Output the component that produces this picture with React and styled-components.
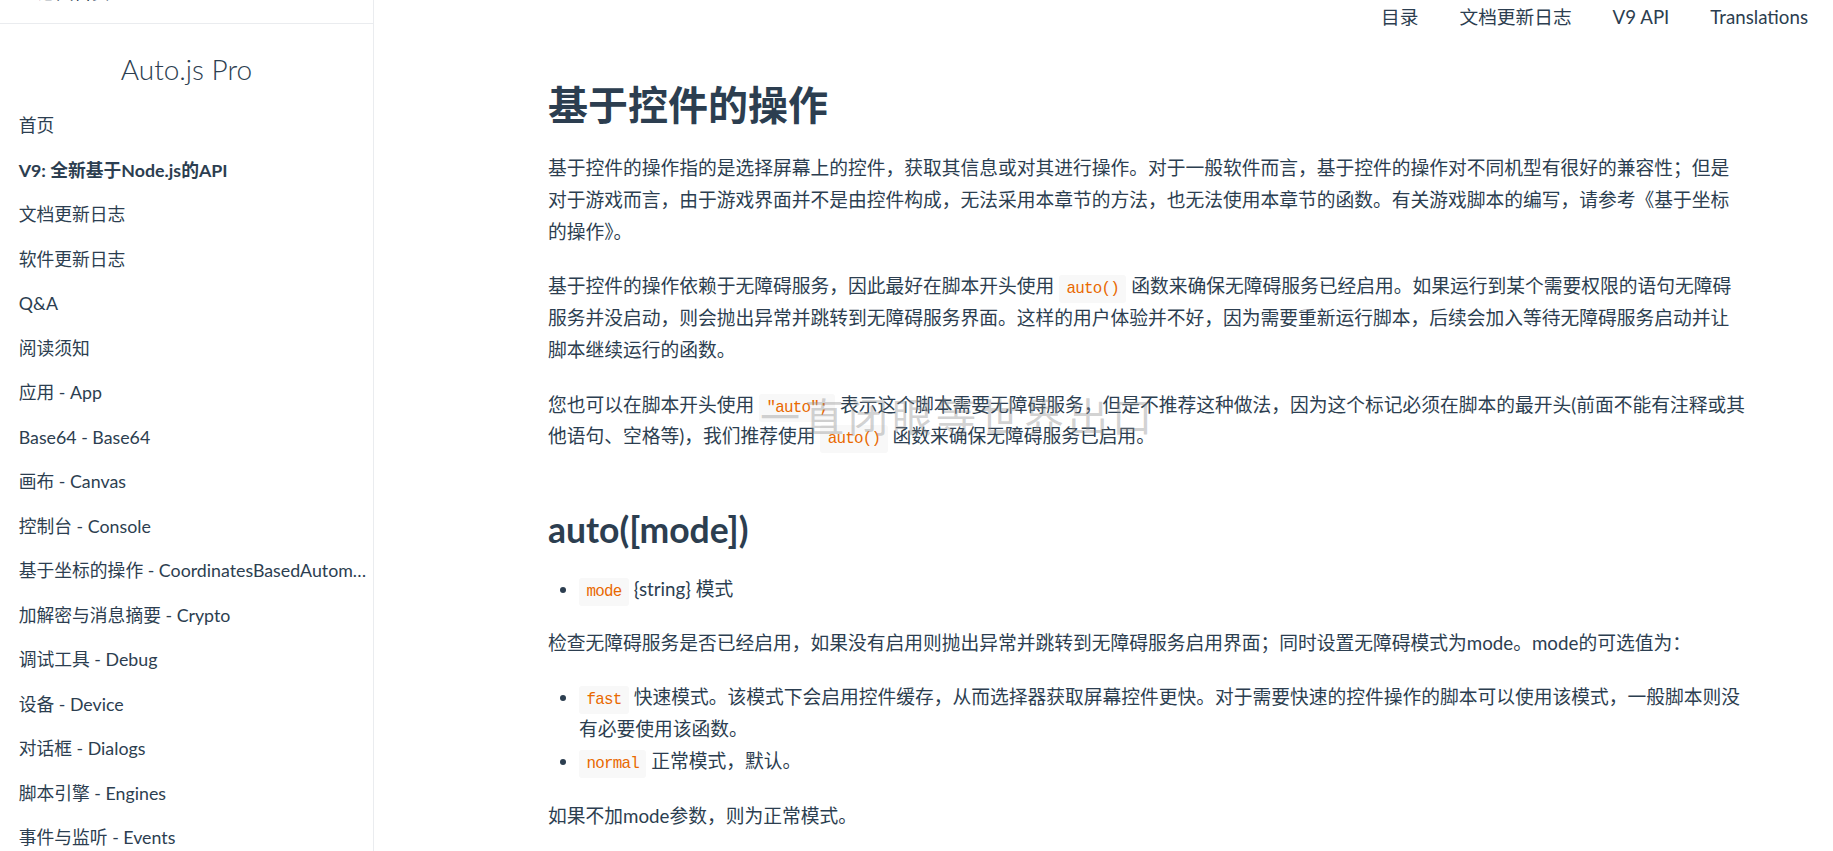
import React from "react";
import styled, { createGlobalStyle } from "styled-components";

const GlobalStyle = createGlobalStyle`
  html, body {
    margin: 0;
    padding: 0;
    background: #fff;
  }
  body {
    font-family: Lato, "Noto Sans CJK SC", sans-serif;
    color: #2c3e50;
    overflow: hidden;
  }
`;

const sidebarLinks = [
  { text: "首页" },
  { text: "V9: 全新基于Node.js的API", active: true },
  { text: "文档更新日志" },
  { text: "软件更新日志" },
  { text: "Q&A" },
  { text: "阅读须知" },
  { text: "应用 - App" },
  { text: "Base64 - Base64" },
  { text: "画布 - Canvas" },
  { text: "控制台 - Console" },
  { text: "基于坐标的操作 - CoordinatesBasedAutomation" },
  { text: "加解密与消息摘要 - Crypto" },
  { text: "调试工具 - Debug" },
  { text: "设备 - Device" },
  { text: "对话框 - Dialogs" },
  { text: "脚本引擎 - Engines" },
  { text: "事件与监听 - Events" },
  { text: "文件系统 - Files" },
  { text: "悬浮窗 - Floaty" },
];

const navLinks = ["目录", "文档更新日志", "V9 API", "Translations"];

function App() {
  return (
    <>
      <GlobalStyle />
      <Page>
        <Sidebar>
          <SidebarTop>
            <BackLink>← 返回首页</BackLink>
          </SidebarTop>
          <SiteTitle>Auto.js Pro</SiteTitle>
          <LinkList>
            {sidebarLinks.map((link) => (
              <SidebarLink key={link.text} $active={link.active}>
                {link.text}
              </SidebarLink>
            ))}
          </LinkList>
        </Sidebar>
        <Main>
          <NavBar>
            {navLinks.map((item) => (
              <NavItem key={item}>{item}</NavItem>
            ))}
          </NavBar>
          <Content>
            <Title>基于控件的操作</Title>
            <Para>
              基于控件的操作指的是选择屏幕上的控件，获取其信息或对其进行操作。对于一般软件而言，基于控件的操作对不同机型有很好的兼容性；但是对于游戏而言，由于游戏界面并不是由控件构成，无法采用本章节的方法，也无法使用本章节的函数。有关游戏脚本的编写，请参考《基于坐标的操作》。
            </Para>
            <Para>
              基于控件的操作依赖于无障碍服务，因此最好在脚本开头使用 <Code>auto()</Code> 函数来确保无障碍服务已经启用。如果运行到某个需要权限的语句无障碍服务并没启动，则会抛出异常并跳转到无障碍服务界面。这样的用户体验并不好，因为需要重新运行脚本，后续会加入等待无障碍服务启动并让脚本继续运行的函数。
            </Para>
            <Para>
              您也可以在脚本开头使用 <Code>"auto";</Code> 表示这个脚本需要无障碍服务，但是不推荐这种做法，因为这个标记必须在脚本的最开头(前面不能有注释或其他语句、空格等)，我们推荐使用 <Code>auto()</Code> 函数来确保无障碍服务已启用。
            </Para>
            <Subtitle>auto([mode])</Subtitle>
            <List>
              <li>
                <Code>mode</Code> {"{string}"} 模式
              </li>
            </List>
            <Para>
              检查无障碍服务是否已经启用，如果没有启用则抛出异常并跳转到无障碍服务启用界面；同时设置无障碍模式为mode。mode的可选值为：
            </Para>
            <List>
              <li>
                <Code>fast</Code> 快速模式。该模式下会启用控件缓存，从而选择器获取屏幕控件更快。对于需要快速的控件操作的脚本可以使用该模式，一般脚本则没有必要使用该函数。
              </li>
              <li>
                <Code>normal</Code> 正常模式，默认。
              </li>
            </List>
            <Para>如果不加mode参数，则为正常模式。</Para>
            <Watermark>一直闭眼等世界出口</Watermark>
          </Content>
        </Main>
      </Page>
    </>
  );
}

const Page = styled.div`
  display: flex;
  height: 100vh;
  overflow: hidden;
`;

const Sidebar = styled.aside`
  flex: 0 0 373px;
  border-right: 1px solid #eaecef;
  overflow: hidden;
`;

const SidebarTop = styled.div`
  height: 23px;
  border-bottom: 1px solid #eaecef;
  overflow: hidden;
`;

const BackLink = styled.div`
  margin-top: -18px;
  padding-left: 16px;
  font-size: 17.8px;
  line-height: 21px;
`;

const SiteTitle = styled.div`
  margin: 27px 0 16px;
  text-align: center;
  font-size: 28px;
  font-weight: 300;
  line-height: 36px;
  color: #2c3e50;
`;

const LinkList = styled.div`
  display: flex;
  flex-direction: column;
`;

const SidebarLink = styled.div`
  padding: 0 6px 0 18.7px;
  font-size: 17.8px;
  line-height: 44.5px;
  font-weight: ${(p) => (p.$active ? 700 : 400)};
  color: #2c3e50;
  white-space: nowrap;
  overflow: hidden;
  text-overflow: ellipsis;
`;

const Main = styled.main`
  flex: 1;
  min-width: 0;
  display: flex;
  flex-direction: column;
  overflow: hidden;
`;

const NavBar = styled.nav`
  flex: 0 0 33.4px;
  display: flex;
  justify-content: flex-end;
  align-items: center;
  gap: 41px;
  padding-right: 25px;
`;

const NavItem = styled.a`
  font-size: 18.7px;
  line-height: 1.4;
  color: #2c3e50;
  cursor: pointer;
`;

const Content = styled.div`
  position: relative;
  flex-shrink: 0;
  width: 1199px;
  padding: 46.6px 0 0 174px;
  font-size: 18.75px;
  line-height: 1.7;
`;

const Title = styled.h1`
  margin: 0;
  font-size: 40px;
  line-height: 1.25;
  font-weight: 700;
  color: #2c3e50;
`;

const Subtitle = styled.h2`
  margin: 55.5px 0 0;
  font-size: 35.5px;
  line-height: 1.25;
  font-weight: 700;
  color: #2c3e50;
`;

const Para = styled.p`
  margin: 22.5px 0;

  ${Title} + & {
    margin-top: 22.3px;
  }
`;

const List = styled.ul`
  margin: 22.3px 0;
  padding-left: 31px;

  ${Subtitle} + & {
    margin-top: 20.5px;
  }
`;

const Code = styled.code`
  font-family: "Liberation Mono", "DejaVu Sans Mono", monospace;
  font-size: 15.9px;
  line-height: 1;
  letter-spacing: -0.8px;
  color: #e96900;
  background: #f8f8f8;
  padding: 5px 7.5px;
  border-radius: 3px;
`;

const Watermark = styled.div`
  position: absolute;
  left: 386px;
  top: 364px;
  font-size: 40px;
  line-height: 1;
  letter-spacing: 4px;
  color: rgba(140, 140, 140, 0.4);
  pointer-events: none;
  white-space: nowrap;
`;

export default App;
